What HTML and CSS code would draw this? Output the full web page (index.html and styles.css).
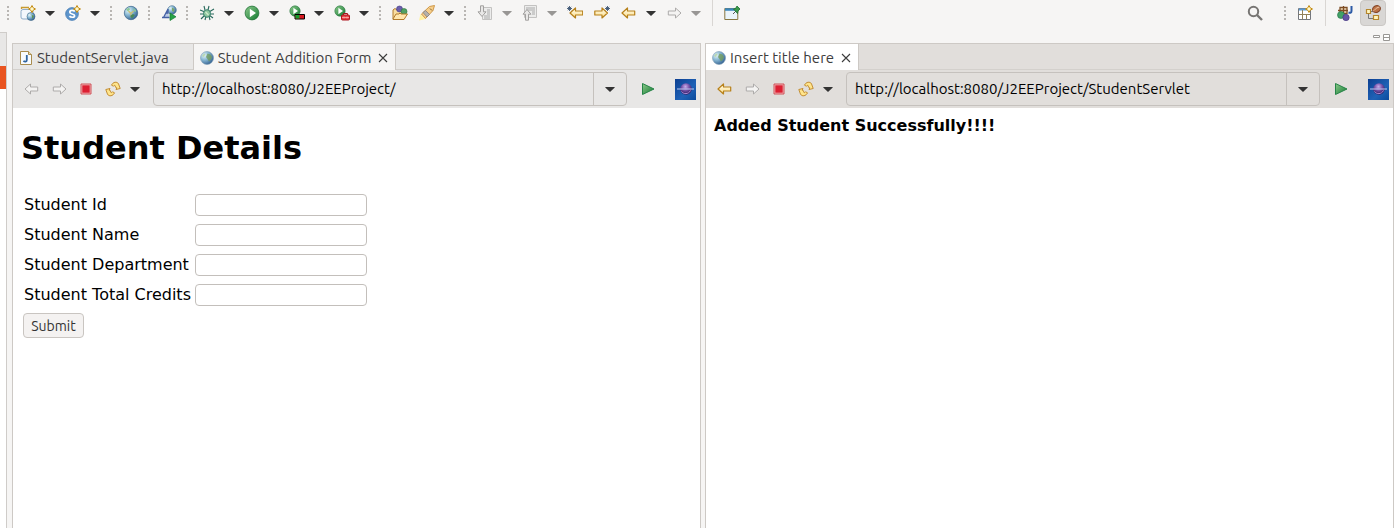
FILE: index.html
```html
<!DOCTYPE html>
<html lang="en">
<head>
<meta charset="utf-8">
<title>Student Addition Form</title>
<link rel="stylesheet" href="styles.css">
</head>
<body>
<svg class="defs" aria-hidden="true">
  <defs>
    <radialGradient id="gGlobe" cx=".3" cy=".3" r=".8"><stop offset="0" stop-color="#e6f5f8"/><stop offset=".45" stop-color="#86b6d2"/><stop offset="1" stop-color="#2d5a8c"/></radialGradient>
    <linearGradient id="gGreen" x2="1" y2="1"><stop stop-color="#8cc98a"/><stop offset="1" stop-color="#137a32"/></linearGradient>
    <linearGradient id="gGold" x2="0" y2="1"><stop stop-color="#fffdf0"/><stop offset="1" stop-color="#fbdc86"/></linearGradient>
    <linearGradient id="gEcl" x2="1" y2="1"><stop stop-color="#0c3f91"/><stop offset=".6" stop-color="#1f62b6"/><stop offset="1" stop-color="#0b4a9c"/></linearGradient>
    <radialGradient id="gOrb" cx=".45" cy=".3" r=".65"><stop stop-color="#c9aeea"/><stop offset=".5" stop-color="#7552a8"/><stop offset="1" stop-color="#2e1b60"/></radialGradient>
    <symbol id="globe" viewBox="0 0 16 16"><circle cx="8" cy="8" r="6.500" fill="url(#gGlobe)" stroke="#7c9cb4" stroke-width=".6"/><path d="M8.500 3.500l3 1 1.500 2.500-1 2.500-2 2-1.500-2.500-1.500-2z" fill="#719a5b" opacity=".8"/><path d="M3 6l2-2.500 1.500.5L5 7z" fill="#b6d6a8" opacity=".9"/></symbol>
    <symbol id="world" viewBox="0 0 16 16"><circle cx="8" cy="8" r="6.700" fill="url(#gGlobe)" stroke="#466f94" stroke-width=".8"/><path d="M3 4.500l3-2 1 2-2 2zM10 3l3 2v2l-2-1z" fill="#8cc89a"/><path d="M5.500 6l2.500 2.500L10.500 6M8 8.500V12" stroke="#cbbf74" stroke-width="1.300" fill="none"/><path d="M7 11l3-2 2 1-3 3.500z" fill="#48895a"/></symbol>
    <symbol id="spark" viewBox="0 0 16 16"><path d="M12 .5l1.200 2.300L15.500 4l-2.300 1.200L12 7.500l-1.200-2.300L8.500 4l2.300-1.200z" fill="#fff8c9" stroke="#c38a10"/></symbol>
    <symbol id="arrow" viewBox="0 0 16 16"><path d="M1 8l5.500-5v3h7.200v4H6.500v3z" fill="url(#gGold)" stroke="#b7811b" stroke-width="1.200" stroke-linejoin="round"/></symbol>
    <symbol id="arrow-off" viewBox="0 0 16 16"><path d="M1 8l5.500-5v3h7.200v4H6.500v3z" fill="#f4f3f2" stroke="#adabaa" stroke-linejoin="round"/></symbol>
    <symbol id="star" viewBox="0 0 16 16"><path d="M2.500 1v5M0 3.500h5M.8 1.800l3.400 3.400M4.200 1.800L.8 5.200" stroke="#3d5674" stroke-width=".9"/></symbol>
    <symbol id="caret" viewBox="0 0 12 8"><path d="M1.500 2h9q.5.300 0 .8L6 7 1.500 2.800Q1 2.300 1.500 2z" fill="currentColor"/></symbol>
    <symbol id="stop" viewBox="0 0 16 16"><path d="M3 3h10v10H3z" fill="#f3b6b8" stroke="#cf5358"/><path d="M4.300 4.300h7.400v7.400H4.300z" fill="#dc1f32"/></symbol>
    <symbol id="refresh" viewBox="0 0 16 16"><g fill="#ffe58c" stroke="#bd8426" stroke-width=".9" stroke-linejoin="round"><path id="swirl" d="M6.500 4.200C8 .8 12 .2 13.500 2.800L15.200 7.500 11 8.500l.8-1.700L10.200 6c.8-1.500-.8-2.300-1.700-.8z"/><path d="M9.500 11.800C8 15.200 4 15.800 2.500 13.200L.8 8.500 5 7.500l-.8 1.700 1.600.8c-.8 1.500.8 2.300 1.700.8z"/></g></symbol>
    <symbol id="play" viewBox="0 0 16 16"><path d="M2.500 2.500v11L14 8z" fill="url(#gGreen)" stroke="#268447"/></symbol>
    <symbol id="eclipse" viewBox="0 0 21 21"><path d="M0 0h21v21H0z" fill="url(#gEcl)"/><circle cx="11" cy="10" r="5.800" fill="url(#gOrb)"/><path d="M6.500 12.500c2 3 7 3 9-1" stroke="#a88bd6" fill="none"/><path d="M2 10h17" stroke="#bcc7f1"/></symbol>
    <symbol id="run" viewBox="0 0 16 16"><circle cx="8" cy="8" r="6.900" fill="url(#gGreen)" stroke="#24743a" stroke-width=".8"/><path d="M5.800 3.800v8.400L12 8z" fill="#fff"/></symbol>
    <symbol id="close" viewBox="0 0 10 10"><path d="M1 1l8 8M9 1L1 9" stroke="#3c3c3c" stroke-width="1.100"/></symbol>
    <symbol id="page-off" viewBox="0 0 16 16"><path d="M5.500 2.500h9v12h-9z" fill="#ececeb" stroke="#c3c2c1"/><path d="M10 5h3M10 7h3M10 9h3M7 11h6M7 13h6" stroke="#aaa"/></symbol>
  </defs>
</svg>

<header class="toolbar" role="toolbar" aria-label="Main toolbar">
  <span class="grip"></span>
  <div class="split">
    <button class="tool" aria-label="New server project"><svg class="icon" viewBox="0 0 16 16"><path d="M1.500 4V2.500H9" stroke="#c79a2f" stroke-width="1.300" fill="none"/><rect x="1" y="4.500" width="12" height="9.500" rx="2" fill="#f3f7fc" stroke="#8eacc9"/><circle cx="11" cy="11.500" r="4" fill="url(#gGlobe)" stroke="#406988" stroke-width=".6"/><path d="M10 9l2 1.500v3.500l2-3z" fill="#5e934f"/><use href="#spark"/></svg></button>
    <button class="drop" aria-label="New server project menu"><svg><use href="#caret"/></svg></button>
  </div>
  <div class="split">
    <button class="tool" aria-label="New servlet"><svg class="icon" viewBox="0 0 16 16"><circle cx="7" cy="9" r="6.400" fill="#5d94cb" stroke="#4278b0" stroke-width=".7"/><path d="M9.800 6.500C8.500 5 4.800 5 4.800 7.200c0 2.300 4.800 1.200 4.800 3.500 0 2-3.800 2-5.200.5" fill="none" stroke="#fff" stroke-width="1.700"/><use href="#spark"/></svg></button>
    <button class="drop" aria-label="New servlet menu"><svg><use href="#caret"/></svg></button>
  </div>
  <span class="grip"></span>
  <button class="tool" aria-label="Open web browser"><svg class="icon"><use href="#world"/></svg></button>
  <span class="grip"></span>
  <button class="tool" aria-label="Launch web services explorer"><svg class="icon" viewBox="0 0 16 16"><circle cx="11" cy="5" r="4.300" fill="url(#gGlobe)" stroke="#5a809c" stroke-width=".7"/><path d="M11 2.500l2.500 1.500-.5 3-2-1z" fill="#7ba567"/><path d="M3 12l4-8 1 8z" fill="#b9c8e4"/><path d="M1 12.500h7.500M2.500 12.500L7 4v4H4.500" fill="none" stroke="#4460a4" stroke-width="1.300"/><path d="M9 8v7.500l6-3.700z" fill="#27a346" stroke="#137a32" stroke-width=".7"/></svg></button>
  <span class="grip"></span>
  <div class="split">
    <button class="tool" aria-label="Debug"><svg class="icon" viewBox="0 0 16 16"><path d="M5 1l1 4M10 1L9 5M1 5l5 2M15 4l-5 3M1 9h14M2 14l4-4M6 15l1-4M14 13l-4-3M11 15l-1-4" stroke="#28695c" stroke-width="1.100"/><ellipse cx="8" cy="8.500" rx="3.500" ry="3.800" fill="#8fc7a0" stroke="#35806c"/><path d="M6.500 7l3 3" stroke="#d3ecd0" stroke-width="1.300"/></svg></button>
    <button class="drop" aria-label="Debug menu"><svg><use href="#caret"/></svg></button>
  </div>
  <div class="split">
    <button class="tool" aria-label="Run"><svg class="icon"><use href="#run"/></svg></button>
    <button class="drop" aria-label="Run menu"><svg><use href="#caret"/></svg></button>
  </div>
  <div class="split">
    <button class="tool" aria-label="Coverage"><svg class="icon" viewBox="0 0 16 16"><use href="#run" width="12" height="12"/><path d="M6 9.500h9.500v4.500H6z" fill="#d71920" stroke="#000"/><path d="M6.500 10h4v3.500h-4z" fill="#159c2c"/></svg></button>
    <button class="drop" aria-label="Coverage menu"><svg><use href="#caret"/></svg></button>
  </div>
  <div class="split">
    <button class="tool" aria-label="External tools"><svg class="icon" viewBox="0 0 16 16"><use href="#run" width="12" height="12"/><path d="M9.500 10V8.500h4V10" fill="none" stroke="#a9141c"/><rect x="7.500" y="10" width="8" height="5" rx="1" fill="#e63a3d" stroke="#ad1820"/><path d="M8 12.500h7M10 11.500v2M13 11.500v2" stroke="#f9b4b0" stroke-width=".8"/></svg></button>
    <button class="drop" aria-label="External tools menu"><svg><use href="#caret"/></svg></button>
  </div>
  <span class="grip"></span>
  <button class="tool" aria-label="Open type"><svg class="icon" viewBox="0 0 16 16"><path d="M1 14V5l2-1.500 2 1.500h7v4" fill="#f9dda0" stroke="#b27a2b"/><circle cx="7.500" cy="4" r="3" fill="#6c5fac" stroke="#413a82" stroke-width=".6"/><circle cx="12" cy="6.500" r="3" fill="#52a064" stroke="#26713a" stroke-width=".6"/><path d="M1 14l3-5h3l1-1 1 1h6.500L12 14.500H1z" fill="#ffe6ae" stroke="#b27a2b"/></svg></button>
  <div class="split">
    <button class="tool" aria-label="Search"><svg class="icon" viewBox="0 0 16 16"><path d="M0 15.500L1.500 9l5 5z" fill="#fff3a2"/><path d="M2.500 9l8-7.500 5-1-1.500 5-7.500 8z" fill="#f7cf8b" stroke="#c8903c" stroke-width=".9"/><path d="M4 7.500l2.500-2 4 4L8 12z" fill="#b5b2ad" stroke="#86827e" stroke-width=".8"/><path d="M11 3.500l2 2" stroke="#805d2b"/></svg></button>
    <button class="drop" aria-label="Search menu"><svg><use href="#caret"/></svg></button>
  </div>
  <span class="grip"></span>
  <div class="split">
    <button class="tool" disabled aria-label="Next annotation"><svg class="icon" viewBox="0 0 16 16"><use href="#page-off"/><path d="M3.500.8h3v6H9L5 11.500 1 6.800h2.500z" fill="#e9e8e7" stroke="#a2a09f"/></svg></button>
    <button class="drop" disabled aria-label="Next annotation menu"><svg><use href="#caret"/></svg></button>
  </div>
  <div class="split">
    <button class="tool" disabled aria-label="Previous annotation"><svg class="icon" viewBox="0 0 16 16"><path d="M2.500.5h12v12h-12z" fill="#ececeb" stroke="#c3c2c1"/><path d="M4 3h9M4 5h9M10 7h3M10 9h3" stroke="#aaa"/><path d="M3.500 15.200h3v-6H9L5 4.500 1 9.200h2.500z" fill="#e9e8e7" stroke="#a2a09f"/></svg></button>
    <button class="drop" disabled aria-label="Previous annotation menu"><svg><use href="#caret"/></svg></button>
  </div>
  <button class="tool" aria-label="Previous edit location"><svg class="icon" viewBox="0 0 16 16"><use href="#arrow" x="2"/><use href="#star"/></svg></button>
  <button class="tool" aria-label="Next edit location"><svg class="icon" viewBox="0 0 16 16"><use href="#arrow" transform="matrix(-1 0 0 1 14.500 0)"/><use href="#star" x="11"/></svg></button>
  <div class="split">
    <button class="tool" aria-label="Back"><svg class="icon"><use href="#arrow"/></svg></button>
    <button class="drop" aria-label="Back menu"><svg><use href="#caret"/></svg></button>
  </div>
  <div class="split">
    <button class="tool" disabled aria-label="Forward"><svg class="icon flip"><use href="#arrow-off"/></svg></button>
    <button class="drop" disabled aria-label="Forward menu"><svg><use href="#caret"/></svg></button>
  </div>
  <span class="rule"></span>
  <button class="tool" aria-label="Pin editor"><svg class="icon" viewBox="0 0 16 16"><path d="M.8 3.500h13v11H.8z" fill="#eaf4fa" stroke="#877640"/><path d="M1 4.500h10" stroke="#3a86bb" stroke-width="2.500"/><path d="M9 9l3-3" stroke="#555"/><path d="M9.500 4l2-.5L13 1l3 3-2 2-.5 2.500z" fill="#3a9a4b" stroke="#1c6f30" stroke-width=".8"/></svg></button>
  <span class="spacer"></span>
  <button class="tool" aria-label="Quick access"><svg class="icon" viewBox="0 0 16 16"><circle cx="6.500" cy="6.500" r="4.700" fill="none" stroke="#777573" stroke-width="2"/><path d="M10 10l5 5" stroke="#777573" stroke-width="2.400"/></svg></button>
  <span class="grip wide"></span>
  <button class="tool" aria-label="Open perspective"><svg class="icon" viewBox="0 0 16 16"><path d="M1.500 3.500h12v11h-12z" fill="#fff" stroke="#74777c"/><path d="M2 4.500h11" stroke="#5a9bd4" stroke-width="2"/><path d="M5.500 5v9M2 9.500h11M9.500 9v5" stroke="#918159"/><use href="#spark"/></svg></button>
  <span class="rule"></span>
  <button class="tool" aria-label="Java perspective"><svg class="icon" viewBox="0 0 16 16"><path d="M3 2.500h7v6H3zM6.500 1v8M1 5.500h10" fill="#f4dfbd" stroke="#7d4c24" stroke-width="1.300"/><path d="M14.500 1v5c0 2-1.500 2-3 1.500" fill="none" stroke="#2c5aa5" stroke-width="2"/><circle cx="4" cy="10" r="3.500" fill="#42a168" stroke="#227044" stroke-width=".6"/><circle cx="9" cy="12.500" r="3.200" fill="#6656a7" stroke="#41347c" stroke-width=".6"/></svg></button>
  <button class="tool current" aria-pressed="true" aria-label="Java EE perspective"><svg class="icon" viewBox="0 0 16 16"><path d="M3.500 8v5.500H9M5 6.500h4" fill="none" stroke="#777"/><path d="M1.500 4.500h4v4h-4zM8.500 10.500h5v4h-5z" fill="#fff5bd" stroke="#b6862c" stroke-width="1.200"/><ellipse cx="11.500" cy="4" rx="4" ry="3.300" fill="#bd7447" stroke="#834325" transform="rotate(-25 11.500 4)"/><path d="M8 6c2-.5 2-3 6.500-4" fill="none" stroke="#edc4a2"/></svg></button>
</header>

<main class="workbench">
  <aside class="trim" aria-label="Explorer"><span class="selected"></span></aside>
  <div class="area">
    <div class="area-controls">
      <button aria-label="Minimize"><svg viewBox="0 0 7 7"><path d="M.5 1.500h6v2h-6z" fill="#fff" stroke="#999794"/></svg></button>
      <button aria-label="Restore"><svg viewBox="0 0 7 7"><path d="M.5.5h6v6h-6zM1 3.500h5" fill="#fff" stroke="#999794"/></svg></button>
    </div>
    <div class="panes">
      <section class="pane">
        <nav class="tabs" aria-label="Editors">
          <a class="tab source" href="#source"><svg class="tab-icon" viewBox="0 0 16 16"><path d="M2.500 1.500h8l3 3v10h-11z" fill="#f7fbff" stroke="#a98c4e"/><path d="M10.500 1.500v3h3" fill="#ead8a5" stroke="#a98c4e"/><path d="M8.800 5v5c0 2-2 2-3.400 1" fill="none" stroke="#2f649f" stroke-width="1.800"/></svg>StudentServlet.java</a>
          <span class="tab active"><svg class="tab-icon"><use href="#globe"/></svg><a href="#form">Student Addition Form</a><button class="close" aria-label="Close Student Addition Form"><svg><use href="#close"/></svg></button></span>
        </nav>
        <div class="browser-bar">
          <button class="nav" disabled aria-label="Back"><svg class="icon"><use href="#arrow-off"/></svg></button>
          <button class="nav" disabled aria-label="Forward"><svg class="icon flip"><use href="#arrow-off"/></svg></button>
          <button class="nav" aria-label="Stop"><svg class="icon"><use href="#stop"/></svg></button>
          <button class="nav" aria-label="Refresh"><svg class="icon"><use href="#refresh"/></svg></button>
          <button class="drop" aria-label="Refresh menu"><svg><use href="#caret"/></svg></button>
          <div class="address"><input type="text" aria-label="Address" value="http://localhost:8080/J2EEProject/"><button aria-label="Address history"><svg><use href="#caret"/></svg></button></div>
          <button class="go" aria-label="Go"><svg class="icon"><use href="#play"/></svg></button>
          <svg class="brand" role="img" aria-label="Eclipse"><use href="#eclipse"/></svg>
        </div>
        <article class="page" id="form">
          <h1>Student Details</h1>
          <form>
            <table>
              <tr><td><label for="sid">Student Id</label></td><td><input id="sid" type="text"></td></tr>
              <tr><td><label for="sname">Student Name</label></td><td><input id="sname" type="text"></td></tr>
              <tr><td><label for="sdept">Student Department</label></td><td><input id="sdept" type="text"></td></tr>
              <tr><td><label for="scred">Student Total Credits</label></td><td><input id="scred" type="text"></td></tr>
              <tr><td class="actions" colspan="2"><button class="submit" type="button">Submit</button></td></tr>
            </table>
          </form>
        </article>
      </section>
      <section class="pane focused">
        <nav class="tabs" aria-label="Result editors">
          <span class="tab active"><svg class="tab-icon"><use href="#globe"/></svg><a href="#result">Insert title here</a><button class="close" aria-label="Close Insert title here"><svg><use href="#close"/></svg></button></span>
        </nav>
        <div class="browser-bar">
          <button class="nav" aria-label="Back"><svg class="icon"><use href="#arrow"/></svg></button>
          <button class="nav" disabled aria-label="Forward"><svg class="icon flip"><use href="#arrow-off"/></svg></button>
          <button class="nav" aria-label="Stop"><svg class="icon"><use href="#stop"/></svg></button>
          <button class="nav" aria-label="Refresh"><svg class="icon"><use href="#refresh"/></svg></button>
          <button class="drop" aria-label="Refresh menu"><svg><use href="#caret"/></svg></button>
          <div class="address"><input type="text" aria-label="Address" value="http://localhost:8080/J2EEProject/StudentServlet"><button aria-label="Address history"><svg><use href="#caret"/></svg></button></div>
          <button class="go" aria-label="Go"><svg class="icon"><use href="#play"/></svg></button>
          <svg class="brand" role="img" aria-label="Eclipse"><use href="#eclipse"/></svg>
        </div>
        <article class="page" id="result"><strong>Added Student Successfully!!!!</strong></article>
      </section>
    </div>
  </div>
</main>
</body>
</html>
```

FILE: styles.css
```css
* { box-sizing: border-box; }

body {
  margin: 0;
  min-height: 100vh;
  display: flex;
  flex-direction: column;
  background: #f6f5f4;
  color: #3d3d3d;
  font: 15px/20px "Ubuntu", "Noto Sans", sans-serif;
}

.defs { position: absolute; width: 0; height: 0; }

button {
  margin: 0;
  padding: 0;
  border: 0;
  background: none;
  color: #333;
  font: inherit;
  display: flex;
  align-items: center;
  justify-content: center;
  flex: none;
}
svg { display: block; flex: none; }
a { color: inherit; text-decoration: none; }
.icon { width: 16px; height: 16px; }
.flip { transform: scaleX(-1); }

.toolbar {
  display: flex;
  align-items: center;
  height: 32px;
  padding: 0 8px 6px 4px;
}
.tool { width: 22px; height: 26px; margin-right: 5px; }
.tool:has(+ .grip) { margin-right: 3px; }
.rule + .tool { margin-right: 4px; }
.split { display: flex; margin-right: 1px; }
.split .tool { margin-right: 0; }
.drop { width: 22px; height: 26px; }
.drop svg, .address svg { width: 12px; height: 8px; }
.drop:disabled { color: #989694; }
.grip {
  width: 2px;
  height: 14px;
  margin: 0 8px 0 3px;
  background: repeating-linear-gradient(#b9b6b3 0 2px, transparent 2px 4px);
}
.grip.wide { margin: 0 8px 0 15px; }
.rule { width: 1px; height: 26px; margin: 0 8px 0 4px; background: #d9d6d3; }
.spacer { flex: 1; }
.tool.current {
  width: 26px;
  margin-right: 0;
  border: 1px solid #cbc8c5;
  border-radius: 4px;
  background: #d9d7d5;
}

.workbench { flex: 1; display: flex; }
.trim {
  width: 7px;
  margin-right: 5px;
  padding-top: 33px;
  border: solid #cfccc9;
  border-width: 1px 1px 0 0;
  background: linear-gradient(#e8e7e6 34px, #fff 34px);
}
.selected { display: block; height: 23px; background: #e95420; }

.area { flex: 1; min-width: 0; display: flex; flex-direction: column; }
.area-controls {
  display: flex;
  justify-content: flex-end;
  align-items: center;
  gap: 3px;
  height: 11px;
  padding-right: 4px;
}
.area-controls svg { width: 7px; height: 7px; }

.panes { flex: 1; display: flex; gap: 4px; }
.pane {
  flex: 1;
  min-width: 0;
  display: flex;
  flex-direction: column;
  border: 1px solid #cdc9c5;
  border-bottom: 0;
  background: #e8e7e6;
}
.focused { background: #e1dedb; }

.tabs { display: flex; height: 26px; border-bottom: 1px solid #d3d0cc; }
.tab {
  display: flex;
  align-items: center;
  height: 26px;
  padding: 2px 7px 0 5px;
  border-right: 1px solid #cdc9c5;
  white-space: nowrap;
}
.tab.source { padding-right: 24px; }
.tab.active { background: #f6f5f4; }
.focused .tab.active { background: #fff; }
.tab-icon { width: 16px; height: 16px; margin-right: 3px; }
.close { margin-left: 7px; }
.close svg { width: 10px; height: 10px; }

.browser-bar { display: flex; align-items: center; height: 38px; padding: 0 4px 0 5px; }
.nav { width: 27px; height: 26px; }
.browser-bar .drop { width: 18px; }
.address {
  flex: 1;
  min-width: 0;
  display: flex;
  height: 34px;
  margin-left: 9px;
  border: 1px solid #c5c1bd;
  border-radius: 4px;
}
.address input {
  flex: 1;
  min-width: 0;
  padding: 0 8px;
  border: 0;
  outline: 0;
  background: none;
  color: #000;
  font: inherit;
}
.address button { width: 33px; border-left: 1px solid #c5c1bd; }
.go { width: 22px; height: 26px; margin: 0 16px 0 10px; }
.brand { width: 21px; height: 21px; }

.page {
  flex: 1;
  padding: 8px;
  background: #fff;
  color: #000;
  font: 16px/19px "DejaVu Sans", sans-serif;
}
.page h1 { margin: 13px 0 21px; font-size: 32px; line-height: 38px; }
.page table { border-spacing: 2px; }
.page td { padding: 1px; }
.page td input {
  display: block;
  width: 172px;
  height: 22px;
  margin: 3px 0 1px;
  border: 1px solid #c3bfbb;
  border-radius: 4px;
  background: #fff;
}
.page .actions { padding: 3px 0 0; }
.submit {
  width: 61px;
  height: 25px;
  border: 1px solid #c9c5c1;
  border-radius: 4px;
  background: #f4f2f1;
  font: 14px/20px "Ubuntu", "Noto Sans", sans-serif;
}
```
